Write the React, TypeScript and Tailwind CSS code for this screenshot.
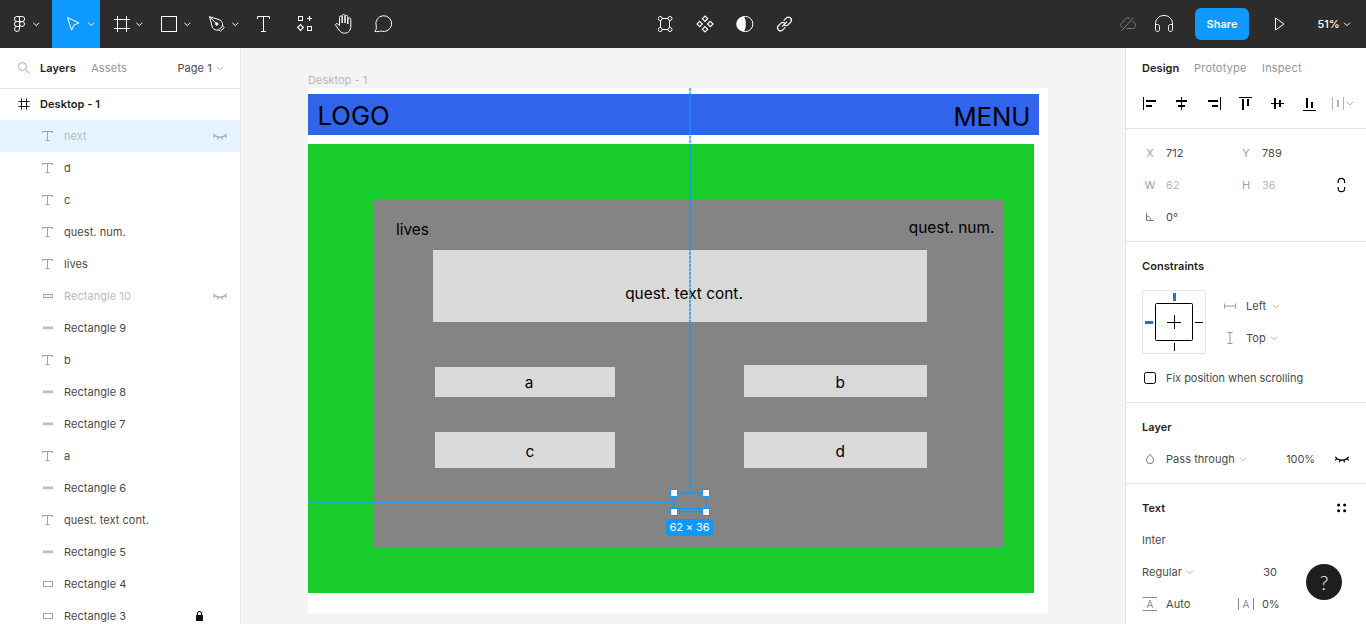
import type { ReactNode } from "react";

type SvgProps = { w: number; h: number; children: ReactNode; className?: string };

/** Outline drawing whose coordinates are the pixels of its own cell. */
function Svg({ w, h, children, className = "" }: SvgProps) {
  return (
    <svg
      width={w}
      height={h}
      viewBox={`0 0 ${w} ${h}`}
      fill="none"
      stroke="currentColor"
      strokeWidth="1"
      className={`block shrink-0 ${className}`}
    >
      {children}
    </svg>
  );
}

function Chevron({ className = "text-[#b3b3b3]" }: { className?: string }) {
  return (
    <Svg w={8} h={8} className={className}>
      <path d="M1 2.7 4 5.7 7 2.7" />
    </Svg>
  );
}

function ClosedEye({ className = "" }: { className?: string }) {
  return (
    <Svg w={16} h={10} className={className}>
      <path
        d="M1.3 2.8C4.6 7.2 11.4 7.2 14.7 2.8M3.2 4.6 1.2 6.2M12.8 4.6l2 1.6M6.2 6 5.5 8.4M9.8 6l.7 2.4"
        strokeWidth="1.2"
      />
    </Svg>
  );
}

function TopBar() {
  return (
    <header className="flex h-12 shrink-0 bg-[#2c2c2c] text-white">
      <div className="flex flex-1">
        <Svg w={52} h={48}>
          <path d="M19.5 16.5h-2.6a2.5 2.5 0 0 0 0 5h2.6zM19.5 16.5h2.6a2.5 2.5 0 0 1 0 5h-2.6zM19.5 21.5h-2.6a2.5 2.5 0 0 0 0 5h2.6zM19.5 26.5h-2.6a2.5 2.5 0 1 0 2.6 2.5z" />
          <circle cx="22" cy="24" r="2.5" />
          <path d="M33.3 22.8 36.2 25.6 39.1 22.8" />
        </Svg>
        <Svg w={48} h={48} className="bg-[#0d99ff]">
          <path d="M15.5 17.5 27 23l-5.1 2-2.3 5.2z" strokeLinejoin="round" />
          <path d="M36.3 22.8 39.2 25.6 42.1 22.8" />
        </Svg>
        <Svg w={48} h={48}>
          <path d="M17.5 16v16M26.5 16v16M14 19.5h16M14 28.5h16" />
          <path d="M36.3 22.8 39.2 25.6 42.1 22.8" />
        </Svg>
        <Svg w={48} h={48}>
          <rect x="13.5" y="16.5" width="15" height="15" />
          <path d="M36.3 22.8 39.2 25.6 42.1 22.8" />
        </Svg>
        <Svg w={48} h={48}>
          <path
            d="M13.5 16.7 24.2 20c2 1.8 2.7 3.5 2.5 6L22.3 30.2c-2.5.1-4.3-.7-5.8-2.5zM13.5 16.7 20 23.2M26.2 25.5l2 2.2-3.8 3.5-2.2-1.7"
            strokeLinejoin="round"
          />
          <circle cx="20.8" cy="24" r="1.2" fill="currentColor" />
          <path d="M36.3 22.8 39.2 25.6 42.1 22.8" />
        </Svg>
        <Svg w={40} h={48}>
          <path d="M13.5 19v-2.5h12V19M19.5 16.5v15M17 31.5h5" />
        </Svg>
        <Svg w={40} h={48}>
          <rect x="14.5" y="16.5" width="4" height="4" />
          <rect x="23.5" y="26.5" width="4" height="4" />
          <path d="M25.5 16v5M23 18.5h5M16.5 24.7l2.8 2.8-2.8 2.8-2.8-2.8z" strokeWidth="1.2" />
        </Svg>
        <Svg w={40} h={48}>
          <path
            d="M15.5 25.5v-8.2c0-1.8 2.7-1.8 2.7 0V23v-7.2c0-1.8 2.8-1.8 2.8 0V23v-6.3c0-1.8 2.8-1.8 2.8 0V24v-4.8c0-1.7 3-1.7 3 0V26c0 4.2-2.4 7.2-6.1 7.2-2.7 0-4.2-1.1-5.7-3.2l-3.8-5.4c.9-1.5 2.5-1.3 3.5.2z"
            strokeLinejoin="round"
          />
        </Svg>
        <Svg w={40} h={48}>
          <path d="M10.7 31.5c1.6-1.6 1.9-3.3 1.5-5.5a7.9 7.9 0 1 1 4.7 5c-1.7.7-3.6.7-6.2.5z" strokeLinejoin="round" />
        </Svg>
      </div>
      <div className="flex w-40 shrink-0">
        <Svg w={40} h={48}>
          <path d="M15.5 21v6.500M24.5 21v6.500M17 18.500h6M17 29.500h6" />
          <circle cx="15.2" cy="18.500" r="2" />
          <circle cx="25" cy="18.500" r="2" />
          <circle cx="15.2" cy="29.500" r="2" />
          <circle cx="25" cy="29.500" r="2" />
        </Svg>
        <Svg w={40} h={48}>
          <path
            d="M20 16l2.7 2.7-2.7 2.7-2.7-2.7zM20 26.600l2.700 2.700-2.700 2.700-2.700-2.700zM14.700 21.300l2.700 2.700-2.700 2.700-2.700-2.700zM25.300 21.300l2.700 2.700-2.700 2.700-2.700-2.700z"
            strokeWidth="1.2"
          />
        </Svg>
        <Svg w={40} h={48}>
          <circle cx="20.300" cy="24" r="7.600" />
          <path d="M18.800 16.400a7.600 7.600 0 0 0 0 15.200c2.800-3.500 2.800-11.700 0-15.200z" fill="currentColor" stroke="none" />
        </Svg>
        <Svg w={40} h={48}>
          <path
            d="M18.700 20.700l2.500-2.500a2.900 2.900 0 0 1 4.400 4.100l-2.700 2.600c-1 .9-2.500.9-3.500.1M20.300 27.300l-2.500 2.500a2.900 2.900 0 0 1-4.400-4.100l2.700-2.600c1-.9 2.500-.9 3.500-.1M17 26.700l5-5"
            strokeWidth="1.2"
          />
        </Svg>
      </div>
      <div className="flex w-[561px] shrink-0 items-center justify-end">
        <Svg w={36} h={48} className="-ml-px text-[#7a7a7a]">
          <path d="M11.500 31 23.500 17.500M12.500 27.500c-2.800-1.200-2.300-5.300 1.100-5.500.2-3.600 3.700-5 6.600-3.400M23 21c-.1 1.100 2.500 1.800 2.600 4.400.1 1.600-1.100 3.100-3 3.100h-6.200" />
        </Svg>
        <Svg w={49} h={48}>
          <path d="M9.500 27.500V24c0-4.900 3.600-8.500 8.500-8.500s8.500 3.600 8.500 8.500v3.500M9.500 24.500h2c1.200 0 2 .8 2 2v3c0 1.200-.8 2-2 2s-2-.8-2-2zM26.500 24.500h-2c-1.200 0-2 .8-2 2v3c0 1.200.8 2 2 2s2-.8 2-2z" />
        </Svg>
        <button className="h-8 w-[54px] rounded-md bg-[#0d99ff] text-[11px] leading-4 font-semibold">
          Share
        </button>
        <Svg w={68} h={48}>
          <path d="M26.500 18v12l8.500-6z" strokeLinejoin="round" />
        </Svg>
        <span className="w-[26px] pl-[0.500px] text-[11px] font-medium tracking-normal">51%</span>
        <Chevron className="mr-[15px] text-white" />
      </div>
    </header>
  );
}

type Kind = "text" | "thin" | "small" | "rect";
type Layer = { name: string; kind: Kind; hidden?: boolean; selected?: boolean; locked?: boolean };

const layers: Layer[] = [
  { name: "next", kind: "text", hidden: true, selected: true },
  { name: "d", kind: "text" },
  { name: "c", kind: "text" },
  { name: "quest. num.", kind: "text" },
  { name: "lives", kind: "text" },
  { name: "Rectangle 10", kind: "small", hidden: true },
  { name: "Rectangle 9", kind: "thin" },
  { name: "b", kind: "text" },
  { name: "Rectangle 8", kind: "thin" },
  { name: "Rectangle 7", kind: "thin" },
  { name: "a", kind: "text" },
  { name: "Rectangle 6", kind: "thin" },
  { name: "quest. text cont.", kind: "text" },
  { name: "Rectangle 5", kind: "thin" },
  { name: "Rectangle 4", kind: "rect" },
  { name: "Rectangle 3", kind: "rect", locked: true },
];

function LayerIcon({ kind }: { kind: Kind }) {
  return (
    <Svg w={12} h={12} className="text-[#a3a3a3]">
      {kind === "text" && <path d="M.5 3V1.500h10V3M5.500 1.500v9M3.500 10.500h4" />}
      {kind === "thin" && <rect x="1" y="4.600" width="10" height="2.600" fill="#bababa" stroke="none" />}
      {kind === "small" && <rect x="1.500" y="4.500" width="9" height="3" />}
      {kind === "rect" && <rect x="1.500" y="3.500" width="9" height="5" />}
    </Svg>
  );
}

function LeftPanel() {
  return (
    <aside className="flex w-[241px] shrink-0 flex-col overflow-hidden border-r border-[#e5e5e5] bg-white">
      <div className="flex h-[41px] shrink-0 items-center border-b border-[#e5e5e5] pl-[17px]">
        <Svg w={14} h={14} className="mr-[9px] text-[#a6a6a6]">
          <circle cx="5.500" cy="5.500" r="4" />
          <path d="M8.500 8.500 12.500 12.500" />
        </Svg>
        <span className="w-[51px] font-semibold text-[#1e1e1e]">Layers</span>
        <span className="w-[86.500px] tracking-[0.2px] text-[#949494]">Assets</span>
        <span className="w-[38.500px]">Page 1</span>
        <Chevron />
      </div>
      <div className="flex h-[31px] shrink-0 items-center pb-px pl-[18px] text-[#1e1e1e]">
        <Svg w={22} h={12}>
          <path d="M3.500.5v11M8.500.5v11M.5 3.500h11M.5 8.500h11" />
        </Svg>
        <span className="font-semibold">Desktop - 1</span>
      </div>
      {layers.map((l) => (
        <div
          key={l.name}
          className={`flex h-8 shrink-0 items-center pr-3 pl-[42px] ${l.selected ? "bg-[#e5f4ff]" : ""}`}
        >
          <LayerIcon kind={l.kind} />
          <span className={`ml-2.5 flex-1 ${l.hidden ? "text-[#b8bcc0]" : ""}`}>{l.name}</span>
          {l.hidden && <ClosedEye className="text-[#a3abb0]" />}
          {l.locked && (
            <Svg w={9} h={12} className="mr-6 text-[#111]">
              <rect x="1" y="5" width="7" height="6" rx=".5" fill="currentColor" stroke="none" />
              <path d="M2.500 5.500V3.500a2 2 0 0 1 4 0v2" strokeWidth="1.2" />
            </Svg>
          )}
        </div>
      ))}
    </aside>
  );
}

/** Free canvas: objects sit at their own coordinates, measured from the canvas corner. */
function Canvas() {
  return (
    <main className="relative flex-1 overflow-hidden bg-[#f4f4f4] text-black">
      <span className="absolute top-6 left-[67px] leading-4 text-[#b8b8b8]">Desktop - 1</span>
      <div className="absolute top-10 left-[67px] h-[525.500px] w-[740px] bg-white">
        <div className="absolute top-[6.400px] left-0 h-[40.200px] w-[731px] bg-[#2f64eb] text-[25.700px] leading-8 tracking-normal">
          <span className="absolute top-[5.600px] left-[9.500px]">LOGO</span>
          <span className="absolute top-[7px] right-[8.500px]">MENU</span>
        </div>
        <div className="absolute top-14 left-0 h-[449px] w-[726px] bg-[#1acc2b]" />
        <div className="absolute top-[111px] left-[65px] h-[349px] w-[630px] bg-[#848484]" />
        <div className="absolute top-[111px] left-[65px] h-[349px] w-[629.400px] text-[15.420px] leading-5 tracking-normal">
          <span className="absolute top-[21px] left-[23px]">lives</span>
          <span className="absolute top-[18.500px] right-2">quest. num.</span>
          <div className="absolute top-[51px] left-[60px] flex h-[72px] w-[494px] items-center justify-center bg-[#d9d9d9] pt-4 pl-2">
            quest. text cont.
          </div>
          <div className="absolute top-[168px] left-[62px] flex h-[30px] w-[180px] items-center justify-center bg-[#d9d9d9] pt-0.5 pl-2">a</div>
          <div className="absolute top-[166px] left-[370.500px] flex h-8 w-[183.500px] items-center justify-center bg-[#d9d9d9] pt-1 pl-2.5">b</div>
          <div className="absolute top-[233px] left-[62px] flex h-9 w-[180px] items-center justify-center bg-[#d9d9d9] pt-1 pl-2.5">c</div>
          <div className="absolute top-[233px] left-[370.500px] flex h-9 w-[183.500px] items-center justify-center bg-[#d9d9d9] pt-1 pl-2.5">d</div>
        </div>
      </div>
      <div className="absolute top-10 left-[448px] h-[404px] w-[2px] bg-[repeating-linear-gradient(to_bottom,#0d99ffb3_0_3px,#0d99ff33_3px_4px)]" />
      <div className="absolute top-[454px] left-[67px] h-px w-[366px] bg-[repeating-linear-gradient(to_right,#0d99ffb3_0_3px,#0d99ff33_3px_4px)]" />
      <svg width="884" height="576" viewBox="0 0 884 576" fill="none" stroke="#0d99ff" className="absolute top-0 left-0">
        <path d="M433 445h32v18.500h-32z" strokeWidth="1.3" />
        <path d="M433 460.500h32" />
        <g fill="#fff">
          <rect x="429.500" y="441.500" width="7" height="7" />
          <rect x="461.500" y="441.500" width="7" height="7" />
          <rect x="429.500" y="460.500" width="7" height="7" />
          <rect x="461.500" y="460.500" width="7" height="7" />
        </g>
      </svg>
      <span className="absolute top-[471px] left-[425px] h-[17px] w-[47px] rounded-sm bg-[#0d99ff] text-center leading-[17px] tracking-[-0.1px] text-white">
        62 × 36
      </span>
    </main>
  );
}

function Field({ label, value, muted }: { label: string; value: string; muted?: boolean }) {
  return (
    <div className="flex w-24">
      <span className="w-4 text-center text-[#a0a0a0]">{label}</span>
      <span className={`ml-2 ${muted ? "text-[#b8b8b8]" : ""}`}>{value}</span>
    </div>
  );
}

function RightPanel() {
  return (
    <aside className="flex w-[241px] shrink-0 flex-col overflow-hidden border-l border-[#e5e5e5] bg-white">
      <div className="flex h-10 shrink-0 items-center pl-4">
        <span className="w-[52px] font-semibold text-[#1e1e1e]">Design</span>
        <span className="w-[68px] tracking-[0.2px] text-[#949494]">Prototype</span>
        <span className="tracking-[0.2px] text-[#949494]">Inspect</span>
      </div>
      <div className="flex h-[41px] shrink-0 border-b border-[#e5e5e5] pl-2 text-black">
        <Svg w={32} h={32}>
          <path d="M9.500 9v13" />
          <path d="M12 13h10M12 18h6" strokeWidth="2" />
        </Svg>
        <Svg w={32} h={32}>
          <path d="M15.500 9v13" />
          <path d="M10 13h11M12 18h7" strokeWidth="2" />
        </Svg>
        <Svg w={32} h={32}>
          <path d="M22.500 9v13" />
          <path d="M10 13h10M14 18h6" strokeWidth="2" />
        </Svg>
        <Svg w={32} h={32}>
          <path d="M9 9.500h13" />
          <path d="M13 11v11M18 11v7" strokeWidth="2" />
        </Svg>
        <Svg w={32} h={32}>
          <path d="M9 15.500h13" />
          <path d="M13 10v11M18 12v7" strokeWidth="2" />
        </Svg>
        <Svg w={32} h={32}>
          <path d="M9 22.500h13" />
          <path d="M13 10v10M18 14v6" strokeWidth="2" />
        </Svg>
        <Svg w={40} h={32} className="text-[#b3b3b3]">
          <path d="M6.500 9v13M17.500 9v13M21 14l3 3 3-3" />
          <path d="M12 12v7" strokeWidth="2" />
        </Svg>
      </div>

      <section className="h-[113px] shrink-0 border-b border-[#e5e5e5] pt-2 pl-4">
        <div className="flex h-8 items-center">
          <Field label="X" value="712" />
          <Field label="Y" value="789" />
        </div>
        <div className="flex h-8 items-center">
          <Field label="W" value="62" muted />
          <Field label="H" value="36" muted />
          <Svg w={16} h={16} className="text-black">
            <path d="M4.200 6V4.500a3.200 3.200 0 0 1 6.400 0V6M4.200 10v1.500a3.200 3.200 0 0 0 6.400 0V10" strokeWidth="1.2" />
          </Svg>
        </div>
        <div className="flex h-8 items-center">
          <Svg w={24} h={12} className="text-[#777]">
            <path d="M4.500 2v7.500H12M4.500 5c2.500 0 4.500 2 4.500 4.500" />
          </Svg>
          <span>0°</span>
        </div>
      </section>

      <section className="h-[161px] shrink-0 border-b border-[#e5e5e5] pt-2 pl-4">
        <h2 className="flex h-8 items-center font-semibold text-[#1e1e1e]">Constraints</h2>
        <div className="mt-2 flex">
          <Svg w={80} h={64} className="text-black">
            <rect x=".5" y=".5" width="63" height="63" rx="1.500" stroke="#e5e5e5" />
            <rect x="13.500" y="13.500" width="37" height="37" rx="1" />
            <path d="M25 32.500h14M32.500 25v14M53 32.500h8M32.500 53v8" />
            <path d="M32.500 3v8M3 32.500h8" stroke="#0d7bdc" strokeWidth="3" />
          </Svg>
          <div>
            <div className="flex h-8 items-center">
              <Svg w={24} h={12} className="text-[#999]">
                <path d="M2.500 3.500v5M13.500 3.500v5M2.500 6h11" />
              </Svg>
              <span className="mr-1.5">Left</span>
              <Chevron />
            </div>
            <div className="flex h-8 items-center">
              <Svg w={24} h={12} className="text-[#999]">
                <path d="M5.500.5h5M5.500 11.500h5M8 .5v11" />
              </Svg>
              <span className="mr-1">Top</span>
              <Chevron />
            </div>
          </div>
        </div>
        <div className="flex h-12 items-center">
          <Svg w={24} h={12} className="text-black">
            <rect x="2.500" y=".5" width="11" height="11" rx="1.800" />
          </Svg>
          <span className="tracking-[-0.03px]">Fix position when scrolling</span>
        </div>
      </section>

      <section className="h-[81px] shrink-0 border-b border-[#e5e5e5] pt-2 pl-4">
        <h2 className="flex h-8 items-center font-semibold text-[#1e1e1e]">Layer</h2>
        <div className="flex h-8 items-center">
          <Svg w={24} h={12} className="text-[#777]">
            <path d="M8 1.200C6.600 3.200 4.500 4.800 4.500 7.200a3.500 3.500 0 0 0 7 0c0-2.400-2.100-4-3.500-6z" />
          </Svg>
          <span className="mr-1">Pass through</span>
          <Chevron />
          <span className="ml-auto tracking-[-0.1px]">100%</span>
          <ClosedEye className="mr-4 ml-[19px] text-black" />
        </div>
      </section>

      <section className="shrink-0 pt-2 pl-4">
        <h2 className="flex h-8 items-center justify-between font-semibold text-[#1e1e1e]">
          Text
          <Svg w={16} h={12} className="mr-4 text-black">
            <g fill="currentColor" stroke="none">
              <circle cx="4.600" cy="3" r="1.500" />
              <circle cx="10.600" cy="3" r="1.500" />
              <circle cx="4.600" cy="8.800" r="1.500" />
              <circle cx="10.600" cy="8.800" r="1.500" />
            </g>
          </Svg>
        </h2>
        <div className="flex h-8 items-center">Inter</div>
        <div className="flex h-8 items-center">
          <span className="mr-1">Regular</span>
          <Chevron />
          <span className="mr-[89px] ml-auto">30</span>
        </div>
        <div className="flex h-8 items-center">
          <span className="mr-[9px] ml-px flex h-[14px] w-[14px] items-center justify-center border-y border-[#888] text-[10px] text-[#888]">A</span>
          <span className="w-[72px]">Auto</span>
          <span className="mr-2 flex h-3 w-4 items-center justify-center border-x border-[#888] text-[10px] text-[#888]">A</span>
          <span className="tracking-[-0.2px]">0%</span>
        </div>
      </section>
    </aside>
  );
}

export default function App() {
  return (
    <div className="relative flex h-[624px] w-[1366px] flex-col overflow-hidden font-['Inter',sans-serif] text-[11px] leading-4 tracking-[0.05px] text-[#4a4a4a]">
      <TopBar />
      <div className="flex min-h-0 flex-1">
        <LeftPanel />
        <Canvas />
        <RightPanel />
      </div>
      <button className="absolute right-6 bottom-6 flex h-9 w-9 items-center justify-center rounded-full bg-[#1e1e1e] font-['Lato','Inter',sans-serif] text-[20px] font-light text-white">
        ?
      </button>
    </div>
  );
}
